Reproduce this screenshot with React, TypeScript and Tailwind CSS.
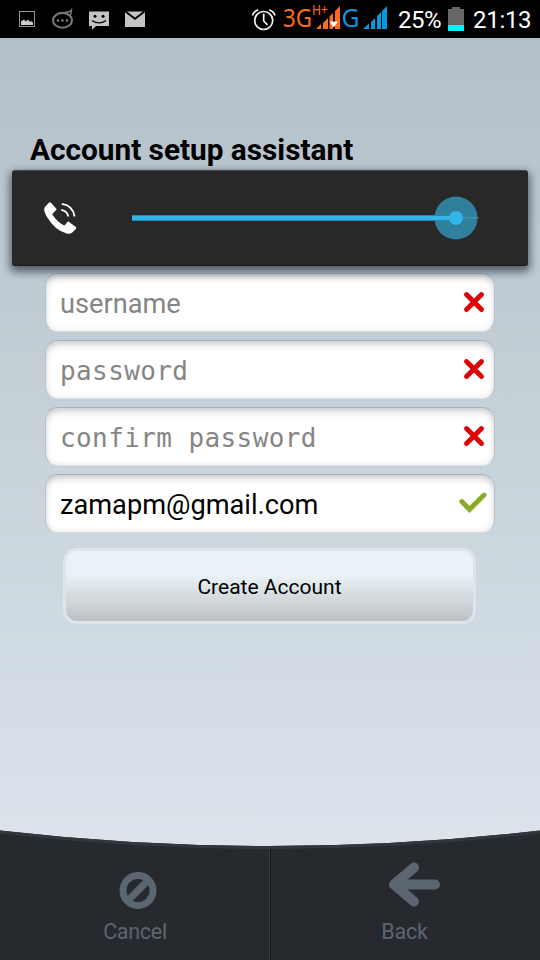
import React from "react";

type FieldProps = {
  placeholder?: string;
  value?: string;
  valid?: boolean;
  mono?: boolean;
};

function Cross() {
  return (
    <svg className="h-[22px] w-[22px]" viewBox="0 0 22 22">
      <path d="M3.500 3.500L18.500 18.500M18.500 3.500L3.500 18.500" stroke="#dc0404" strokeWidth="4.900" strokeLinecap="round" />
    </svg>
  );
}

function Check() {
  return (
    <svg className="h-[22px] w-[28px]" viewBox="0 0 28 22" fill="none">
      <path d="M2.800 9.500L10.500 17.500L25 3" stroke="#8aab25" strokeWidth="4.900" strokeLinecap="round" />
    </svg>
  );
}

function Field({ placeholder, value, valid, mono }: FieldProps) {
  return (
    <div className="flex h-[59px] items-center justify-between rounded-[13px] border border-t-[#a3b1be] border-x-[#b4c0ca] border-b-[#d7dee3] bg-white pl-[14px] shadow-[inset_0_6px_8px_-3px_rgba(0,0,0,0.18),inset_0_0_7px_rgba(0,0,0,0.1)]">
      <input
        className={
          mono
            ? "mt-[4px] w-[380px] bg-transparent font-['DejaVu_Sans_Mono',monospace] text-[26px] tracking-[0.4px] text-black outline-none placeholder:text-[#858585] placeholder:opacity-100"
            : "mt-[4px] w-[380px] bg-transparent text-[27.2px] text-black outline-none placeholder:text-[#858585] placeholder:opacity-100"
        }
        placeholder={placeholder}
        defaultValue={value}
      />
      <div className={valid ? "pr-[7px] pb-px" : "pr-[9px] pb-px"}>{valid ? <Check /> : <Cross />}</div>
    </div>
  );
}

function StatusBar() {
  return (
    <header className="flex h-[38px] items-center bg-black text-white">
      <svg className="h-[38px] w-[390px] shrink-0" viewBox="0 0 390 38" fill="none">
        <rect x="19.5" y="11.5" width="15" height="15" stroke="#929292" />
        <path d="M21 25V21.5L24 19.5L26 21.5L28 19.5L30 22L31 21L33 22.5V25Z" fill="#ccc" />
        <ellipse cx="62.5" cy="20.3" rx="9.500" ry="7.4" stroke="#777" strokeWidth="2.1" />
        <path d="M65 12.3Q70 12 71.5 10Q71.5 14 69.5 16" stroke="#777" strokeWidth="1.5" />
        <circle cx="58" cy="20.5" r="1.2" fill="#888" />
        <circle cx="62.5" cy="20.5" r="1.2" fill="#888" />
        <circle cx="67" cy="20.5" r="1.2" fill="#888" />
        <path d="M89 11.5H109V26H96L92 30V26H89Z" fill="#c4c4c4" />
        <circle cx="95" cy="16.3" r="1.5" fill="#000" />
        <circle cx="103" cy="16.3" r="1.5" fill="#000" />
        <path d="M92 20.5Q99 25.3 106 20.5" stroke="#000" strokeWidth="1.4" />
        <rect x="125" y="11.5" width="20" height="15.5" fill="#c4c4c4" />
        <path d="M125.5 11.5L135 18.8L144.5 11.5" stroke="#000" strokeWidth="1.8" />
        <g stroke="#f3f3f3" strokeWidth="1.7">
          <circle cx="263.7" cy="20.5" r="9" />
          <path d="M263.7 13.8V21L267.5 24.8M252.4 15.5Q253.5 11.5 258.2 9.7M269.2 9.7Q273.9 11.5 275 15.5" />
        </g>
        <text x="283" y="27" fill="#ff6c18" fontFamily="Noto Sans, sans-serif" fontSize="25.500" textLength="29" lengthAdjust="spacingAndGlyphs">3G</text>
        <text x="312" y="15" fill="#ff6c18" fontFamily="Noto Sans, sans-serif" fontSize="13.500" textLength="16" lengthAdjust="spacingAndGlyphs">H+</text>
        <path d="M316 29L321 24V29ZM323 23L328 18V29H323ZM329.500 16.5L333 13V29H329.500ZM335 11L340 6V29H335Z" fill="#ff6c18" />
        <path d="M329.500 21.500H338L333.700 27.500Z" fill="#fff" />
        <text x="341.500" y="27" fill="#0798df" fontFamily="Noto Sans, sans-serif" fontSize="25.500" textLength="18" lengthAdjust="spacingAndGlyphs">G</text>
        <path d="M363 29L369 23.500V29ZM371 22L375 18V29H371ZM377 16L381 12V29H377ZM382 11L387 6V29H382Z" fill="#0798df" />
      </svg>
      <span className="mt-[2px] ml-[8px] w-[50px] text-[24px] leading-[38px] tracking-[-0.5px]">25%</span>
      <svg className="-mt-px h-[24px] w-[16px]" viewBox="0 0 16 24">
        <path d="M4 0H12V2H16V24H0V2H4Z" fill="#666" />
        <rect y="18" width="16" height="6" fill="#00f4ff" />
      </svg>
      <span className="mt-[2px] ml-[9px] text-[24px] leading-[38px] tracking-[-0.3px]">21:13</span>
    </header>
  );
}

function VolumePanel() {
  return (
    <section className="absolute top-[170px] left-[12px] flex h-[96px] w-[516px] items-center rounded-[3px] border-t border-b border-t-[#454545] border-b-[#161618] bg-[#282828] shadow-[0_4px_9px_2px_rgba(20,25,38,0.6)]">
      <svg className="mt-px ml-[31px] h-[36px] w-[36px]" viewBox="0 0 36 36" fill="none">
        <path d="M2.2 5.8L6.1 1.6Q7.2 .8 8.200 2L13.700 8.300L9.200 13.200Q14 21 21.500 24.600L25.100 20.300L32.800 26.100Q33.600 27 32.800 28L29 31.700Q27 33.400 23.800 32.600Q12 29.500 4 16Q-.500 8.500 2.200 5.800Z" fill="#fff" />
        <path d="M18.200 8.800Q24.500 10 25.200 15.500M18.800 2.900Q30 4.500 31.600 15.500" stroke="#fff" strokeWidth="1.800" />
      </svg>
      <svg className="ml-[53px] h-[48px] w-[352px]" viewBox="0 0 352 48">
        <path d="M324 24H347" stroke="#555" strokeWidth="1.500" />
        <circle cx="324" cy="24" r="21.500" fill="#33b5e5" fillOpacity=".62" />
        <rect y="21" width="324" height="6" fill="#258ab0" />
        <rect y="22" width="324" height="4" fill="#33b5e9" />
        <circle cx="324" cy="24" r="7" fill="#33b5e9" />
      </svg>
    </section>
  );
}

function Footer() {
  return (
    <footer className="relative h-[130px]">
      <svg className="absolute inset-0 h-[130px] w-[540px]" viewBox="0 0 540 130">
        <path d="M0 .5Q135 16 270 16Q405 16 540 .5V130H0Z" fill="#262a2e" />
        <path d="M0 2Q135 17.500 270 17.500Q405 17.500 540 2" fill="none" stroke="#31383d" strokeWidth="3" />
        <path d="M269.500 17V130" stroke="#363c40" />
        <path d="M270.500 17V130" stroke="#171b1e" />
      </svg>
      <div className="relative grid h-full grid-cols-2 text-[21.5px] text-[#5c6670]">
        <button className="flex flex-col items-center pt-[41px]">
          <svg className="ml-[5px] h-[38px] w-[38px]" viewBox="0 0 38 38" fill="none" stroke="#5c6670">
            <circle cx="19" cy="19.500" r="15" strokeWidth="7" />
            <path d="M9 29.500L29 9.500" strokeWidth="7" />
          </svg>
          <span className="mt-[10px] leading-[26px] tracking-[-0.3px]">Cancel</span>
        </button>
        <button className="flex flex-col items-center pt-[31px]">
          <svg className="ml-[17px] h-[46px] w-[54px]" viewBox="0 0 54 46" fill="none" stroke="#5c6670" strokeWidth="10" strokeLinecap="round" strokeLinejoin="round">
            <path d="M27 6.500L7 23.500L27 40.500M8 23.500H48" />
            <path d="M7 23.500L20 16V31Z" fill="#5c6670" stroke="none" />
          </svg>
          <span className="mt-[12px] mr-px leading-[26px] tracking-[-0.2px]">Back</span>
        </button>
      </div>
    </footer>
  );
}

export default function App() {
  return (
    <div className="relative flex h-[960px] w-[540px] flex-col overflow-hidden bg-linear-to-b from-[#b1bec5] to-[#e1e9f1] font-[Roboto,sans-serif]">
      <StatusBar />
      <main className="flex flex-1 flex-col">
        <h1 className="mt-[94px] ml-[30px] text-[29.8px] leading-[36px] font-bold tracking-[-0.02px] text-black">Account setup assistant</h1>
        <form className="mt-[105px] flex flex-col gap-[8px] pr-[45px] pl-[45px]">
          <Field placeholder="username" />
          <Field placeholder="password" mono />
          <Field placeholder="confirm password" mono />
          <Field value="zamapm@gmail.com" valid />
          <button type="button" className="mt-[7px] ml-[18px] h-[76px] w-[413px] rounded-[14px] border-[3px] border-[#dde5eb] bg-linear-to-b from-[#e9f2f6] from-35% to-[#bdc1c4] pt-[3px] text-[21px] text-black">Create Account</button>
        </form>
      </main>
      <Footer />
      <VolumePanel />
    </div>
  );
}
